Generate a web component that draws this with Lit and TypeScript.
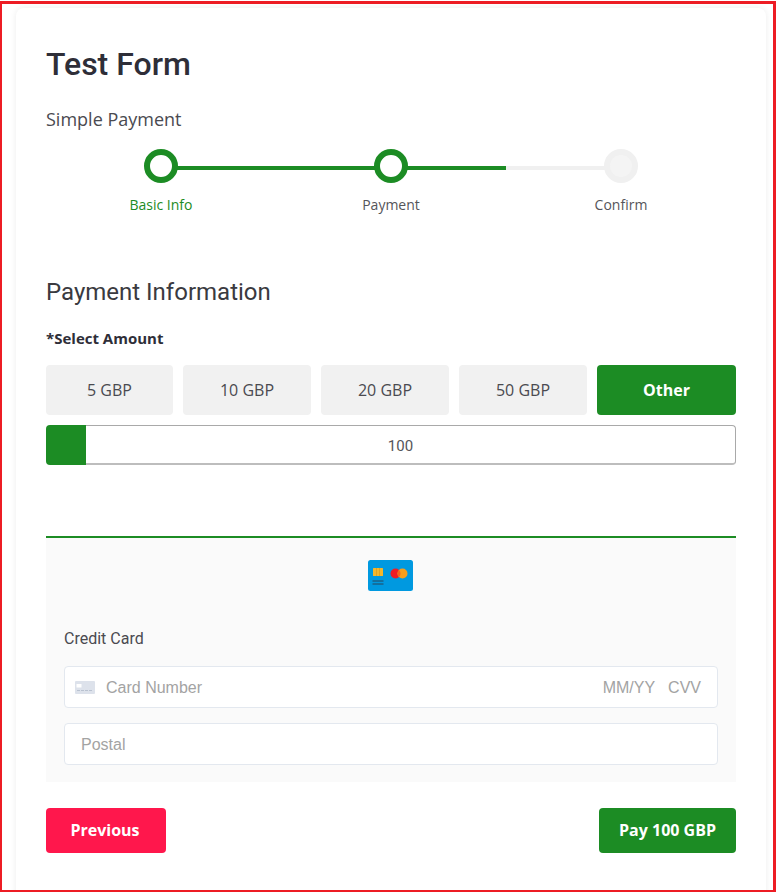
import { LitElement, html, css } from "lit";
import { customElement } from "lit/decorators.js";

const AMOUNTS = ["5 GBP", "10 GBP", "20 GBP", "50 GBP"];
const STEPS = ["Basic Info", "Payment", "Confirm"];

@customElement("app-root")
export class AppRoot extends LitElement {
  static styles = css`
    :host {
      display: block;
      box-sizing: border-box;
      height: 891px;
      margin-top: 1px;
      border: 2px solid #ed1c24;
      border-top-width: 3px;
      border-right-width: 3px;
      padding: 4px 7px 0 14px;
      background: #fff;
      overflow: hidden;
      font-family: "Open Sans", sans-serif;
      color: #3c3c41;
    }
    .card {
      box-sizing: border-box;
      height: 900px;
      border-radius: 8px 8px 0 0;
      box-shadow: 0 0 6px rgba(0, 0, 0, 0.08);
      padding: 30px;
    }
    h1 {
      margin: 0;
      font: 500 32px/52px Roboto, sans-serif;
      color: #2e2e38;
    }
    .subtitle {
      margin-top: 17px;
      font-size: 18px;
      line-height: 24px;
      color: #4a4a50;
    }
    .steps {
      display: grid;
      grid-template-columns: repeat(3, 1fr);
      margin-top: 18px;
    }
    .step {
      display: flex;
      flex-direction: column;
      align-items: center;
      position: relative;
      font-size: 14px;
      line-height: 20px;
      color: #55555a;
    }
    .step.active {
      color: #1c8c24;
    }
    .dot {
      box-sizing: border-box;
      width: 34px;
      height: 34px;
      border-radius: 50%;
      border: 6px solid #f0f0f0;
      background: #f4f4f4;
      margin-bottom: 12px;
      position: relative;
      z-index: 1;
    }
    .step.done .dot {
      border-color: #1c8c24;
      background: #fff;
    }
    .line {
      position: absolute;
      left: 50%;
      width: 100%;
      top: 17px;
      height: 4px;
      background: linear-gradient(to right, #1c8c24 50%, #f0f0f0 50%);
    }
    .line.full {
      background: #1c8c24;
    }
    h2 {
      margin: 61px 0 0;
      font: 400 24px/32px Roboto, sans-serif;
      color: #3a3a40;
    }
    .label {
      margin-top: 20px;
      font-size: 15px;
      font-weight: 700;
      line-height: 20px;
      color: #2e2e38;
    }
    .amounts {
      display: grid;
      grid-template-columns: 127px 128px 128px 128px 139px;
      gap: 10px;
      margin-top: 17px;
    }
    .amount {
      height: 50px;
      display: flex;
      align-items: center;
      justify-content: center;
      background: #f1f1f1;
      border-radius: 4px;
      font-size: 16px;
      color: #4a4a50;
    }
    .amount.selected {
      background: #1c8c24;
      color: #fff;
      font-weight: 700;
    }
    .other {
      display: flex;
      height: 40px;
      margin-top: 10px;
    }
    .other-tab {
      width: 40px;
      background: #1c8c24;
      border-radius: 4px 0 0 4px;
    }
    .other-field {
      flex: 1;
      box-sizing: border-box;
      border: 1px solid #a9a9a9;
      border-left: 0;
      border-bottom-width: 2px;
      border-bottom-color: #bdbdbd;
      border-radius: 0 4px 4px 0;
      display: flex;
      align-items: center;
      justify-content: center;
      padding: 2px 20px 0 0;
      font: 400 15px Roboto, sans-serif;
      color: #55555a;
    }
    .payment {
      margin-top: 71px;
      border-top: 2px solid #1c8c24;
      background: #fafafa;
      height: 246px;
      box-sizing: border-box;
      padding: 22px 18px 0;
    }
    .brand {
      display: block;
      margin-left: 304px;
    }
    .card-label {
      margin-top: 38px;
      font: 400 16px/20px Roboto, sans-serif;
      color: #4a4a50;
    }
    .input {
      box-sizing: border-box;
      height: 42px;
      background: #fff;
      border: 1px solid #e3e8ef;
      border-radius: 4px;
      display: flex;
      align-items: center;
      padding: 2px 16px 0;
      font: 400 16px "Liberation Sans", Arial, sans-serif;
      color: #a3a3a3;
    }
    .card-number {
      margin-top: 17px;
      padding-left: 10px;
    }
    .postal {
      margin-top: 15px;
    }
    .card-glyph {
      margin: -2px 11px 0 0;
    }
    .spacer {
      flex: 1;
    }
    .cvv {
      margin-left: 13px;
    }
    .actions {
      display: flex;
      justify-content: space-between;
      margin-top: 26px;
    }
    .btn {
      height: 45px;
      box-sizing: border-box;
      display: flex;
      align-items: center;
      justify-content: center;
      padding-bottom: 2px;
      border-radius: 4px;
      color: #fff;
      font-size: 16px;
      font-weight: 700;
    }
    .prev {
      width: 120px;
      padding-right: 2px;
      background: #ff174c;
    }
    .pay {
      width: 137px;
      background: #1c8c24;
    }
  `;

  renderBrand() {
    return html`<svg class="brand" width="45" height="31" viewBox="0 0 45 31">
      <rect width="45" height="31" rx="2.5" fill="#0099e0" />
      <rect x="5" y="8" width="10" height="8" rx="0.5" fill="#f5b72c" />
      <path d="M8.5 8v8M11.5 8v8" stroke="#d99a1e" stroke-width="0.7" />
      <path d="M4.5 21h11M4.5 24h11" stroke="#27465c" stroke-width="1" />
      <circle cx="27.5" cy="13.5" r="5" fill="#ee1c25" />
      <circle cx="34.5" cy="13.5" r="5" fill="#f79e1b" />
      <path d="M31 9.9a5 5 0 0 1 0 7.2a5 5 0 0 1 0 -7.2z" fill="#f4651e" />
    </svg>`;
  }

  renderCardGlyph() {
    return html`<svg class="card-glyph" width="20" height="13" viewBox="0 0 20 13">
      <rect width="20" height="13" rx="1" fill="#dde2eb" />
      <rect x="1.5" y="3" width="5" height="3.5" fill="#fff" />
      <path d="M2 9.5h16" stroke="#b9c2d0" stroke-width="1" stroke-dasharray="3 1" />
    </svg>`;
  }

  render() {
    return html`
      <div class="card">
        <h1>Test Form</h1>
        <div class="subtitle">Simple Payment</div>
        <div class="steps">
          ${STEPS.map(
            (s, i) => html`<div class="step ${i < 2 ? "done" : ""} ${i === 0 ? "active" : ""}">
              ${i < 2 ? html`<div class="line ${i === 0 ? "full" : ""}"></div>` : ""}
              <div class="dot"></div>
              <span>${s}</span>
            </div>`
          )}
        </div>
        <h2>Payment Information</h2>
        <div class="label">*Select Amount</div>
        <div class="amounts">
          ${AMOUNTS.map((a) => html`<div class="amount">${a}</div>`)}
          <div class="amount selected">Other</div>
        </div>
        <div class="other">
          <div class="other-tab"></div>
          <div class="other-field">100</div>
        </div>
        <div class="payment">
          ${this.renderBrand()}
          <div class="card-label">Credit Card</div>
          <div class="input card-number">
            ${this.renderCardGlyph()}
            <span>Card Number</span>
            <span class="spacer"></span>
            <span>MM/YY</span>
            <span class="cvv">CVV</span>
          </div>
          <div class="input postal">Postal</div>
        </div>
        <div class="actions">
          <div class="btn prev">Previous</div>
          <div class="btn pay">Pay 100 GBP</div>
        </div>
      </div>
    `;
  }
}
